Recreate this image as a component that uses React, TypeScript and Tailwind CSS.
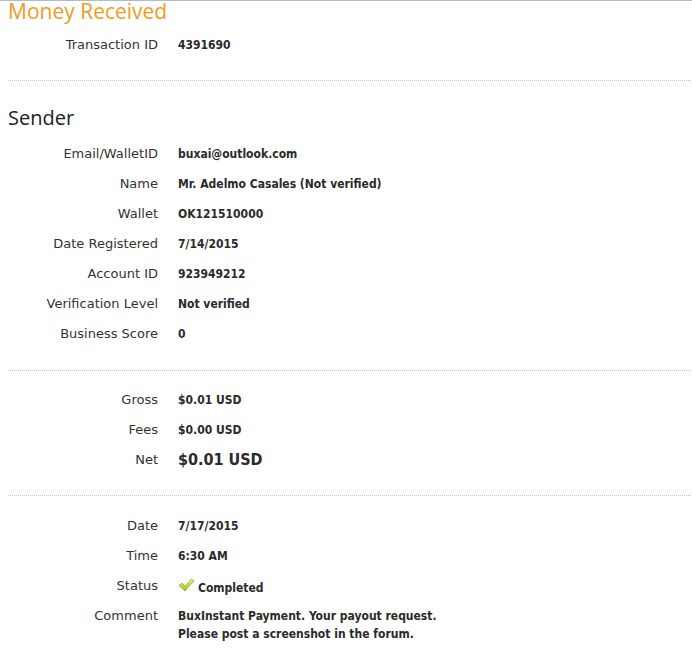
import React from "react";

const Row = ({ label, children, big }: { label: string; children: React.ReactNode; big?: boolean }) => (
  <div className="flex py-[6px]">
    <div className="w-[158px] shrink-0 text-right text-[13px] leading-[18px] text-[#333]">{label}</div>
    <div className={"pl-[20px] font-bold text-[#2a2a2a] [font-stretch:condensed] " + (big ? "text-[16px] leading-[18px]" : "text-[12px] leading-[18px]")}>{children}</div>
  </div>
);

const Check = () => (
  <svg width="17" height="15" viewBox="0 0 17 15" className="inline-block mr-[3px] -mt-[7px]">
    <defs>
      <linearGradient id="g" x1="0" y1="0" x2="0" y2="1">
        <stop offset="0" stopColor="#eef57a" />
        <stop offset="1" stopColor="#94c21e" />
      </linearGradient>
    </defs>
    <path d="M1 7.5 L4.2 5.2 L7 8.2 L13.5 1 L16 2.8 L7 13 Z" fill="url(#g)" stroke="#86a91c" strokeWidth="0.7" strokeLinejoin="round" />
  </svg>
);

const Hr = ({ mt, mb }: { mt: string; mb: string }) => (
  <div className={"border-t border-dotted border-[#c4c4c4] ml-[8px] mr-[1px] " + mt + " " + mb} />
);

export default function App() {
  return (
    <div className="w-[692px] h-[652px] bg-white border-t border-[#a9bdd3] overflow-hidden" style={{ fontFamily: '"DejaVu Sans", Verdana, sans-serif' }}>
      <div className="pl-[8px] text-[21px] leading-[22px] text-[#f39a1c] -mt-[1px]" style={{ fontFamily: '"Open Sans", sans-serif' }}>Money Received</div>
      <div className="mt-[8px]">
        <Row label="Transaction ID">4391690</Row>
      </div>
      <Hr mt="mt-[20px]" mb="mb-[25px]" />
      <div className="pl-[8px] text-[20px] leading-[24px] text-[#222]" style={{ fontFamily: '"Open Sans", sans-serif' }}>Sender</div>
      <div className="mt-[9px]">
        <Row label="Email/WalletID">buxai@outlook.com</Row>
        <Row label="Name">Mr. Adelmo Casales (Not verified)</Row>
        <Row label="Wallet">OK121510000</Row>
        <Row label="Date Registered">7/14/2015</Row>
        <Row label="Account ID">923949212</Row>
        <Row label="Verification Level">Not verified</Row>
        <Row label="Business Score">0</Row>
      </div>
      <Hr mt="mt-[21px]" mb="mb-[14px]" />
      <Row label="Gross">$0.01 USD</Row>
      <Row label="Fees">$0.00 USD</Row>
      <Row label="Net" big>$0.01 USD</Row>
      <Hr mt="mt-[20px]" mb="mb-[15px]" />
      <Row label="Date">7/17/2015</Row>
      <Row label="Time">6:30 AM</Row>
      <Row label="Status"><span className="relative top-[2px]"><Check />Completed</span></Row>
      <Row label="Comment">BuxInstant Payment. Your payout request.<br />Please post a screenshot in the forum.</Row>
    </div>
  );
}
